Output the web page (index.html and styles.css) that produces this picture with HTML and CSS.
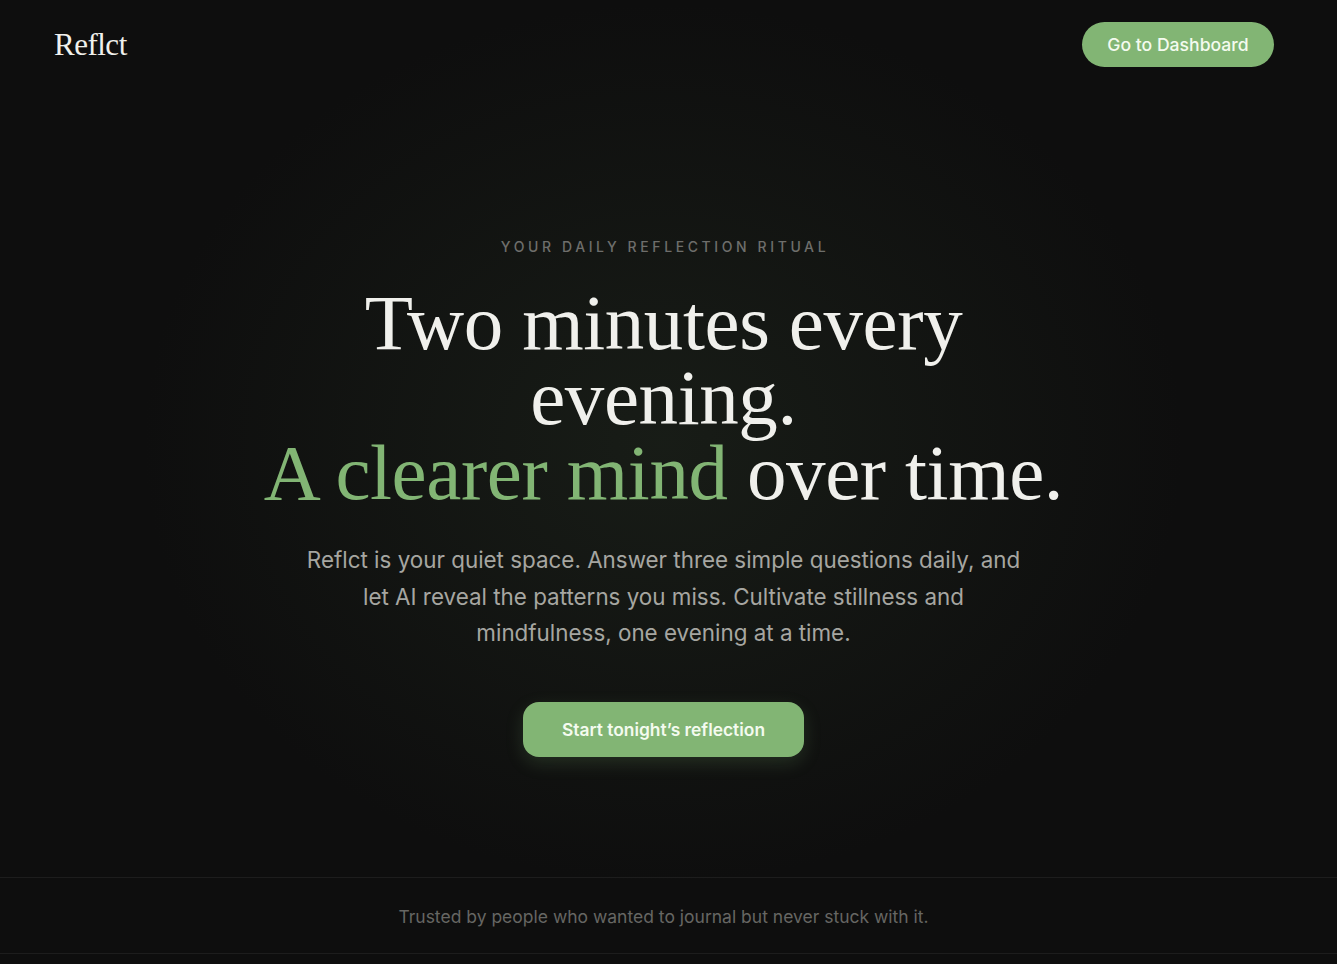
FILE: index.html
```html
<!DOCTYPE html>
<html lang="en">
<head>
    <meta charset="UTF-8">
    <meta name="viewport" content="width=device-width, initial-scale=1.0">
    <title>Reflct</title>
    <link rel="stylesheet" href="styles.css">
</head>
<body>
    <div class="page">
        <header class="topbar">
            <a class="logo" href="#">Reflct</a>
            <a class="btn btn-small" href="#">Go to Dashboard</a>
        </header>

        <main class="hero">
            <p class="eyebrow">Your daily reflection ritual</p>
            <h1 class="headline">
                Two minutes every<br>
                evening.<br>
                <span class="accent">A clearer mind</span> over time.
            </h1>
            <p class="lead">
                Reflct is your quiet space. Answer three simple questions daily, and
                let AI reveal the patterns you miss. Cultivate stillness and
                mindfulness, one evening at a time.
            </p>
            <a class="btn btn-large" href="#">Start tonight’s reflection</a>
        </main>

        <footer class="trust">
            <p>Trusted by people who wanted to journal but never stuck with it.</p>
        </footer>
    </div>
</body>
</html>
```

FILE: styles.css
```css
:root {
    --bg-color: #0e0e0e;
    --text-color: #f0f0ec;
    --muted-color: #a6a6a1;
    --dim-color: #6e6e6b;
    --accent-color: #82b574;
    --border-color: #1d1d1d;
}

* {
    box-sizing: border-box;
    margin: 0;
    padding: 0;
}

body {
    background: var(--bg-color);
    color: var(--text-color);
    font-family: 'Inter', 'Liberation Sans', sans-serif;
    min-height: 100vh;
}

a {
    text-decoration: none;
    color: inherit;
}

.page {
    min-height: 100vh;
    display: flex;
    flex-direction: column;
    background: radial-gradient(ellipse 520px 440px at 49.6% 46%, rgba(32, 40, 30, 0.55), rgba(14, 14, 14, 0) 100%);
}

.topbar {
    display: flex;
    justify-content: space-between;
    align-items: center;
    padding: 22px 63px 0 54px;
}

.logo {
    font-family: 'Liberation Serif', 'DejaVu Serif', serif;
    font-size: 31px;
    letter-spacing: -0.5px;
    color: var(--text-color);
}

.btn {
    display: inline-flex;
    align-items: center;
    justify-content: center;
    background: var(--accent-color);
    color: #f4fbef;
    font-weight: 500;
}

.btn-small {
    width: 192px;
    height: 45px;
    border-radius: 23px;
    font-size: 17.6px;
}

.hero {
    flex: 1;
    display: flex;
    flex-direction: column;
    align-items: center;
    text-align: center;
    padding: 171px 10px 0 0;
}

.eyebrow {
    font-size: 14px;
    font-weight: 500;
    letter-spacing: 3.6px;
    text-transform: uppercase;
    color: var(--dim-color);
    margin-left: 3px;
}

.headline {
    font-family: 'Liberation Serif', 'DejaVu Serif', serif;
    font-weight: 400;
    font-size: 79px;
    line-height: 75px;
    letter-spacing: -0.4px;
    color: var(--text-color);
    margin-top: 30px;
}

.accent {
    color: var(--accent-color);
}

.lead {
    max-width: 724px;
    font-size: 22.4px;
    line-height: 36.5px;
    color: var(--muted-color);
    margin-top: 32px;
}

.btn-large {
    width: 281px;
    height: 55px;
    border-radius: 16px;
    font-size: 17.4px;
    font-weight: 600;
    margin-top: 50px;
    box-shadow: 0 6px 18px rgba(130, 181, 116, 0.18);
}

.trust {
    margin-top: 119px;
    border-top: 1px solid var(--border-color);
    border-bottom: 1px solid var(--border-color);
    height: 77px;
    margin-bottom: 10px;
    display: flex;
    align-items: center;
    justify-content: center;
    padding-right: 10px;
}

.trust p {
    font-size: 17.5px;
    color: #666663;
    margin-top: 2px;
}
```
